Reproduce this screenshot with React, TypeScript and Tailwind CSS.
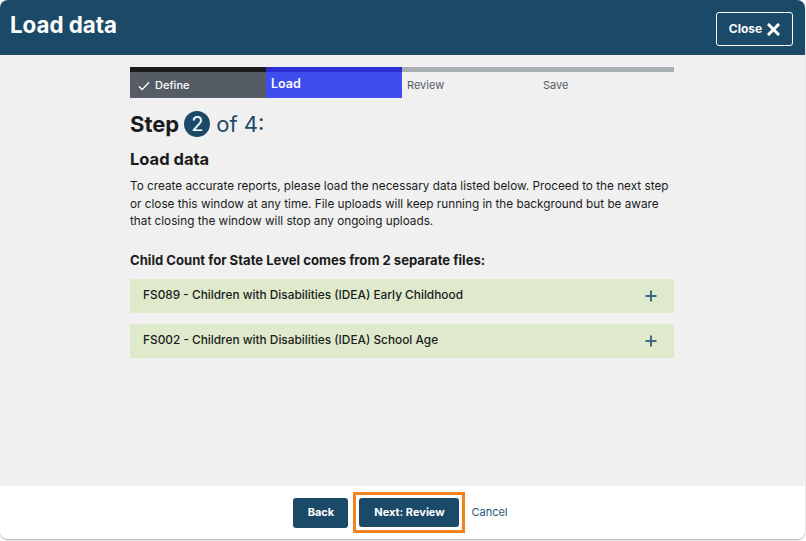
import React from "react";

const font = { fontFamily: '"Inter", "Liberation Sans", sans-serif' };

function Check() {
  return (
    <svg width="12" height="10" viewBox="0 0 12 10" className="mr-[5px]">
      <path d="M1 5.5 L4.2 8.6 L11 1.2" fill="none" stroke="white" strokeWidth="1.4" />
    </svg>
  );
}

function Plus() {
  return (
    <svg width="12" height="12" viewBox="0 0 12 12">
      <path d="M6 0.5 V11.5 M0.5 6 H11.5" stroke="#3d6a84" strokeWidth="2" />
    </svg>
  );
}

function XIcon() {
  return (
    <svg width="13" height="13" viewBox="0 0 13 13" className="ml-[5px]">
      <path d="M2 2 L11 11 M11 2 L2 11" stroke="white" strokeWidth="3" strokeLinecap="square" />
    </svg>
  );
}

export default function App() {
  return (
    <div className="w-[806px] h-[541px] bg-white" style={font}>
      <div className="w-[805px] h-[539px] flex flex-col rounded-[8px] overflow-hidden shadow-[0_1px_2px_rgba(0,0,0,0.35)]">
        <div className="h-[55px] bg-[#1b4a68] flex items-start justify-between pl-[10px] pr-[12px] shrink-0">
          <h1 className="text-white font-bold text-[22.3px] leading-[26px] mt-[12px]">Load data</h1>
          <button className="mt-[12px] h-[34px] w-[77px] border border-white rounded-[3px] flex items-center justify-center text-white font-bold text-[12px]">
            Close
            <XIcon />
          </button>
        </div>
        <div className="flex-1 bg-[#f0f0f0]">
          <div className="w-[544px] ml-[130px] pt-[12px]">
            <div className="grid grid-cols-4">
              <div>
                <div className="h-[5px] bg-[#1b1b1b]" />
                <div className="h-[26px] bg-[#565c65] flex items-center pl-[8px] pt-[1px] text-white text-[11px] font-medium">
                  <Check />
                  Define
                </div>
              </div>
              <div>
                <div className="h-[5px] bg-[#2a2ed0]" />
                <div className="h-[26px] bg-[#3e4ded] flex items-center pl-[5px] text-white text-[12.5px] font-semibold pb-[1px]">
                  Load
                </div>
              </div>
              <div>
                <div className="h-[5px] bg-[#a9aeb1]" />
                <div className="h-[26px] flex items-center pl-[5px] pt-[1px] text-[#565c65] text-[11px]">Review</div>
              </div>
              <div>
                <div className="h-[5px] bg-[#a9aeb1]" />
                <div className="h-[26px] flex items-center pl-[5px] pt-[1px] text-[#565c65] text-[11px]">Save</div>
              </div>
            </div>
            <div className="flex items-center mt-[12px] h-[28px] text-[22px]">
              <span className="font-bold text-[#1b1b1b]">Step</span>
              <span className="ml-[5px] w-[26px] h-[26px] rounded-full bg-[#1b4a68] text-white flex items-center justify-center text-[20px] leading-none">2</span>
              <span className="ml-[6px] text-[#1b4a68]">of 4:</span>
            </div>
            <h2 className="mt-[11px] text-[16.5px] font-bold text-[#1b1b1b] leading-[20px]">Load data</h2>
            <p className="mt-[9px] text-[11.75px] leading-[17.5px] text-[#1b1b1b]">
              To create accurate reports, please load the necessary data listed below. Proceed to the next step or close this window at any time. File uploads will keep running in the background but be aware that closing the window will stop any ongoing uploads.
            </p>
            <h3 className="mt-[20px] text-[13.1px] font-bold text-[#1b1b1b] leading-[18px]">
              Child Count for State Level comes from 2 separate files:
            </h3>
            <div className="mt-[10px] flex flex-col gap-[11px]">
              <div className="h-[34px] bg-[#dfeacc] flex items-center justify-between pl-[13px] pr-[17px] text-[11.85px] font-medium text-[#1b1b1b]">
                <span>FS089 - Children with Disabilities (IDEA) Early Childhood</span>
                <Plus />
              </div>
              <div className="h-[34px] bg-[#dfeacc] flex items-center justify-between pl-[13px] pr-[17px] text-[11.85px] font-medium text-[#1b1b1b]">
                <span>FS002 - Children with Disabilities (IDEA) School Age</span>
                <Plus />
              </div>
            </div>
          </div>
        </div>
        <div className="h-[53px] bg-white shrink-0 flex items-center justify-center pr-[4px]">
          <button className="h-[30px] w-[55px] rounded-[3px] bg-[#1b4a68] text-white font-bold text-[11px]">Back</button>
          <div className="ml-[5px] p-[3px] border-[3px] border-[#f58220]">
            <button className="h-[29px] w-[100px] rounded-[3px] bg-[#1b4a68] text-white font-bold text-[11px] block">Next: Review</button>
          </div>
          <span className="ml-[6px] text-[11px] text-[#1f5a82]">Cancel</span>
        </div>
      </div>
    </div>
  );
}
